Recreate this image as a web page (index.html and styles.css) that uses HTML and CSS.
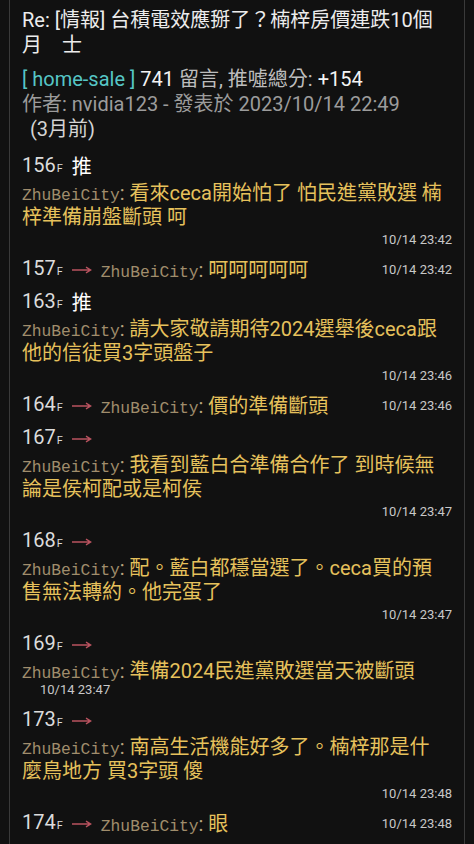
FILE: index.html
```html
<!DOCTYPE html>
<html lang="zh-Hant">
<head>
<meta charset="utf-8">
<title>PTT</title>
<link rel="stylesheet" href="styles.css">
</head>
<body>
<div class="thread">
  <h1 class="title">Re: [情報] 台積電效應掰了？楠梓房價連跌10個月　士</h1>
  <div class="meta">
    <div><span class="board">[ home-sale ]</span> <span class="count">741</span> <span class="label">留言, 推噓總分:</span> <span class="count">+154</span></div>
    <div class="author">作者: nvidia123 - 發表於 2023/10/14 22:49</div>
    <div class="ago">(3月前)</div>
  </div>

  <div class="comments">
    <div class="comment">
      <div class="c-head"><span class="floor">156<small>F</small></span><span class="push">推</span></div>
      <div class="c-body"><span class="user">ZhuBeiCity</span><span class="colon">:</span> 看來ceca開始怕了 怕民進黨敗選 楠梓準備崩盤斷頭 呵</div>
      <div class="ts">10/14 23:42</div>
    </div>

    <div class="c-row">
      <span class="floor">157<small>F</small></span>
      <svg class="arrow" width="20" height="10" viewBox="0 0 20 10"><path d="M0 5H18M14 2.2L18.6 5L14 7.8" /></svg>
      <span class="c-inline"><span class="user">ZhuBeiCity</span><span class="colon">:</span> 呵呵呵呵呵</span>
      <span class="ts">10/14 23:42</span>
    </div>

    <div class="comment">
      <div class="c-head"><span class="floor">163<small>F</small></span><span class="push">推</span></div>
      <div class="c-body"><span class="user">ZhuBeiCity</span><span class="colon">:</span> 請大家敬請期待2024選舉後ceca跟他的信徒買3字頭盤子</div>
      <div class="ts">10/14 23:46</div>
    </div>

    <div class="c-row">
      <span class="floor">164<small>F</small></span>
      <svg class="arrow" width="20" height="10" viewBox="0 0 20 10"><path d="M0 5H18M14 2.2L18.6 5L14 7.8" /></svg>
      <span class="c-inline"><span class="user">ZhuBeiCity</span><span class="colon">:</span> 價的準備斷頭</span>
      <span class="ts">10/14 23:46</span>
    </div>

    <div class="comment">
      <div class="c-head"><span class="floor">167<small>F</small></span><svg class="arrow" width="20" height="10" viewBox="0 0 20 10"><path d="M0 5H18M14 2.2L18.6 5L14 7.8" /></svg></div>
      <div class="c-body"><span class="user">ZhuBeiCity</span><span class="colon">:</span> 我看到藍白合準備合作了 到時候無論是侯柯配或是柯侯</div>
      <div class="ts">10/14 23:47</div>
    </div>

    <div class="comment">
      <div class="c-head"><span class="floor">168<small>F</small></span><svg class="arrow" width="20" height="10" viewBox="0 0 20 10"><path d="M0 5H18M14 2.2L18.6 5L14 7.8" /></svg></div>
      <div class="c-body"><span class="user">ZhuBeiCity</span><span class="colon">:</span> 配。藍白都穩當選了。ceca買的預售無法轉約。他完蛋了</div>
      <div class="ts">10/14 23:47</div>
    </div>

    <div class="comment">
      <div class="c-head"><span class="floor">169<small>F</small></span><svg class="arrow" width="20" height="10" viewBox="0 0 20 10"><path d="M0 5H18M14 2.2L18.6 5L14 7.8" /></svg></div>
      <div class="c-body"><span class="user">ZhuBeiCity</span><span class="colon">:</span> 準備2024民進黨敗選當天被斷頭</div>
      <div class="ts ts-left">10/14 23:47</div>
    </div>

    <div class="comment">
      <div class="c-head"><span class="floor">173<small>F</small></span><svg class="arrow" width="20" height="10" viewBox="0 0 20 10"><path d="M0 5H18M14 2.2L18.6 5L14 7.8" /></svg></div>
      <div class="c-body"><span class="user">ZhuBeiCity</span><span class="colon">:</span> 南高生活機能好多了。楠梓那是什麼鳥地方 買3字頭 傻</div>
      <div class="ts">10/14 23:48</div>
    </div>

    <div class="c-row">
      <span class="floor">174<small>F</small></span>
      <svg class="arrow" width="20" height="10" viewBox="0 0 20 10"><path d="M0 5H18M14 2.2L18.6 5L14 7.8" /></svg>
      <span class="c-inline"><span class="user">ZhuBeiCity</span><span class="colon">:</span> 眼</span>
      <span class="ts">10/14 23:48</span>
    </div>
  </div>
</div>
</body>
</html>
```
FILE: styles.css
```css
html, body {
  margin: 0;
  padding: 0;
  background: #111111;
}

body {
  color: #e8e8e8;
  font-family: Roboto, "Noto Sans CJK TC", sans-serif;
  font-size: 20px;
}

.thread {
  margin: 0 9px;
  border-left: 1px solid #3a3a3a;
  border-right: 1px solid #3a3a3a;
  padding: 8px 12px 0;
  min-height: 100vh;
  box-sizing: border-box;
}

.title {
  margin: 0;
  font-size: 20px;
  font-weight: normal;
  line-height: 25px;
  color: #ececec;
}

.meta {
  margin-top: 9px;
  line-height: 25px;
}

.board {
  color: #56c6c6;
}

.count {
  color: #f4f4f4;
}

.label {
  color: #bdbdbd;
}

.author {
  color: #9c9c9c;
}

.ago {
  color: #d4d4d4;
  padding-left: 8px;
}

.comments {
  margin-top: 12px;
  display: flex;
  flex-direction: column;
  gap: 7px;
}

.c-head,
.c-row {
  display: flex;
  align-items: center;
  height: 26px;
  gap: 9px;
  white-space: nowrap;
  overflow: visible;
}

.floor {
  color: #dcdcdc;
  line-height: 26px;
}

.floor small {
  font-size: 11px;
  margin-left: 1px;
}

.push {
  color: #ffffff;
  line-height: 26px;
}

.arrow {
  flex: none;
}

.arrow path {
  fill: none;
  stroke: #b9535f;
  stroke-width: 1.4;
}

.c-body {
  margin-top: 1px;
  padding-right: 3px;
  line-height: 24px;
  color: #e6c15c;
}

.c-inline {
  color: #e6c15c;
  line-height: 26px;
}

.user {
  font-family: "Liberation Mono", monospace;
  font-size: 16.3px;
  line-height: 16px;
  color: #a08d6c;
}

.colon {
  color: #b9a57f;
}

.ts {
  margin-top: 1px;
  text-align: right;
  font-size: 13px;
  line-height: 20px;
  color: #c8c8c8;
}

.c-row .ts {
  margin: 0 0 0 auto;
}

.ts-left {
  text-align: left;
  padding-left: 18px;
  margin-top: 0;
  margin-bottom: 4px;
  line-height: 14px;
}
```
